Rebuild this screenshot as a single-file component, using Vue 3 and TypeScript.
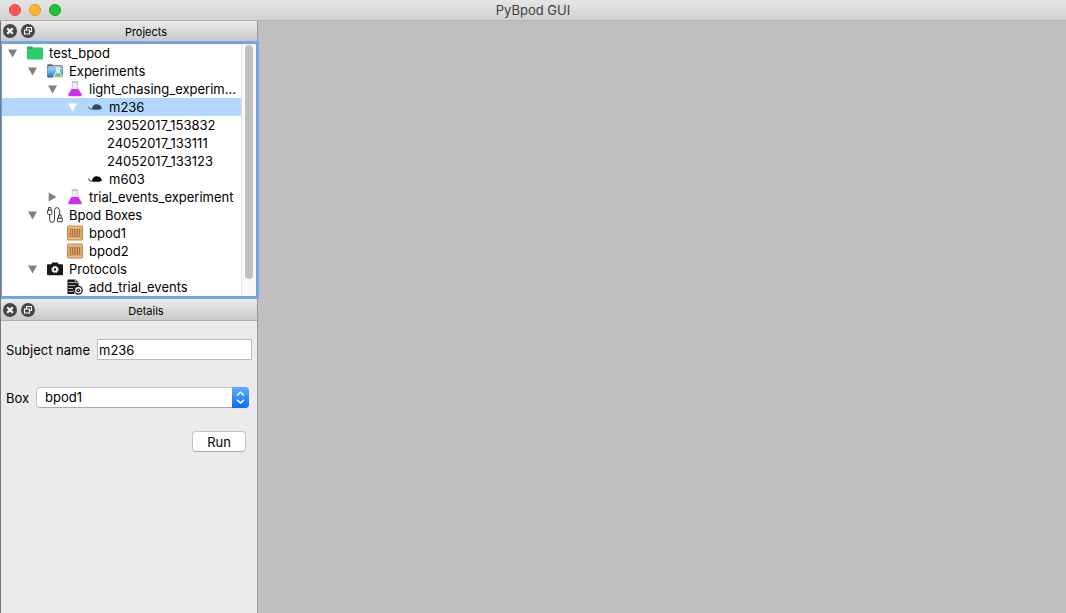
<script setup lang="ts">
import { ref } from 'vue'

type Icon = 'folder' | 'experiments' | 'flask' | 'mouse' | 'cable' | 'crate' | 'camera' | 'protocol'

interface TreeRow {
  id: string
  label: string
  level: number
  icon?: Icon
  open?: boolean
}

const rows = ref<TreeRow[]>([
  { id: 'project', label: 'test_bpod', level: 0, icon: 'folder', open: true },
  { id: 'experiments', label: 'Experiments', level: 1, icon: 'experiments', open: true },
  { id: 'light', label: 'light_chasing_experim...', level: 2, icon: 'flask', open: true },
  { id: 'm236', label: 'm236', level: 3, icon: 'mouse', open: true },
  { id: 's1', label: '23052017_153832', level: 4 },
  { id: 's2', label: '24052017_133111', level: 4 },
  { id: 's3', label: '24052017_133123', level: 4 },
  { id: 'm603', label: 'm603', level: 3, icon: 'mouse' },
  { id: 'trial', label: 'trial_events_experiment', level: 2, icon: 'flask', open: false },
  { id: 'boxes', label: 'Bpod Boxes', level: 1, icon: 'cable', open: true },
  { id: 'bpod1', label: 'bpod1', level: 2, icon: 'crate' },
  { id: 'bpod2', label: 'bpod2', level: 2, icon: 'crate' },
  { id: 'protocols', label: 'Protocols', level: 1, icon: 'camera', open: true },
  { id: 'add', label: 'add_trial_events', level: 2, icon: 'protocol' },
])

const selected = ref('m236')
const subject = ref('m236')
const box = ref('bpod1')
const docks = ['Projects', 'Details']
</script>

<template>
  <div class="window">
    <header class="titlebar">
      <div class="lights">
        <button class="light close" aria-label="Close window"></button>
        <button class="light minimise" aria-label="Minimise window"></button>
        <button class="light zoom" aria-label="Zoom window"></button>
      </div>
      <h1>PyBpod GUI</h1>
    </header>

    <div class="body">
      <aside class="side">
        <section v-for="dock in docks" :key="dock" class="dock" :aria-label="dock">
          <div class="dock-head">
            <button class="dock-btn" :aria-label="`Close ${dock}`">
              <svg viewBox="0 0 14 14"><circle cx="7" cy="7" r="7" fill="#464646" /><path d="M4.2 4.2l5.6 5.6M9.8 4.2L4.2 9.8" stroke="#fff" stroke-width="2.1" /></svg>
            </button>
            <button class="dock-btn" :aria-label="`Float ${dock}`">
              <svg viewBox="0 0 14 14"><circle cx="7" cy="7" r="7" fill="#464646" /><path d="M5.5 5.5v-2h5v4h-2M3.5 6h5v4h-5z" fill="none" stroke="#fff" stroke-width="1.1" /></svg>
            </button>
            <h2>{{ dock }}</h2>
          </div>

          <div v-if="dock === 'Projects'" class="tree-frame">
            <ul class="tree" role="tree" aria-label="Projects">
              <li
                v-for="row in rows"
                :key="row.id"
                class="row"
                :class="{ selected: row.id === selected }"
                role="treeitem"
                :aria-level="row.level + 1"
                :aria-selected="row.id === selected"
                :aria-expanded="row.open"
                @click="selected = row.id"
              >
                <span v-for="n in row.level" :key="n" class="indent"></span>
                <button v-if="row.open !== undefined" class="toggle" :aria-label="`Toggle ${row.label}`">
                  <svg viewBox="0 0 10 10"><path :d="row.open ? 'M0 1.5h9L4.5 9.5z' : 'M0.7 0.5v9L8.5 5z'" fill="currentColor" /></svg>
                </button>
                <span v-else class="toggle"></span>
                <span v-if="row.icon" class="icon">
                  <svg v-if="row.icon === 'folder'" viewBox="0 0 16 16"><path d="M0 2.2q0-.7.7-.7H5l1 1h9.3q.7 0 .7.7V8H0z" fill="#28ad60" /><path d="M0 4h5.2l1-1h9.2q.6 0 .6.6v10.2q0 .7-.7.7H.7q-.7 0-.7-.7z" fill="#2ecc71" /></svg>
                  <svg v-else-if="row.icon === 'experiments'" viewBox="0 0 16 16">
                    <defs><linearGradient id="blue" x2="0" y2="1"><stop stop-color="#b5dcf6" /><stop offset=".5" stop-color="#62aeea" /><stop offset="1" stop-color="#2468b8" /></linearGradient></defs>
                    <path d="M.3 5V2q0-.8.8-.8h4l1 1h8.4q1 0 1 1V5z" fill="#526a80" />
                    <path d="M1.2 3h13.5v2H1.2z" fill="#e6edf2" />
                    <rect x=".3" y="4" width="15.4" height="10.3" rx="1" fill="url(#blue)" stroke="#326a9d" stroke-width=".6" />
                    <path d="M8.5 4.8h5M9.6 4.8v3.4l-3 5q-.6 1.6 1 1.6h6.600q1.400 0 .8-1.600l-2.600-5V4.800" fill="#dceaf0" stroke="#f5fafb" stroke-width=".8" />
                    <path d="M9 10.2h4l1.7 3.6H7.2z" fill="#7fbd5c" />
                  </svg>
                  <svg v-else-if="row.icon === 'flask'" viewBox="0 0 16 16">
                    <path d="M5.400 1.300v5.200L1.300 13.200Q.6 15.200 2.300 15.200h11.400q1.700 0 1-2L10.600 6.500V1.300z" fill="#e4e9ed" stroke="#bcc5cb" stroke-width=".7" />
                    <path d="M4.700 7.900h6.600l3.100 5.400q.6 1.600-.8 1.600H2.400q-1.400 0-.8-1.600z" fill="#d42cf2" />
                    <path d="M4.600.9h6.800" stroke="#aeb8bf" stroke-width="1.300" /><path d="M7 2v4.500" stroke="#fff" />
                  </svg>
                  <svg v-else-if="row.icon === 'mouse'" viewBox="0 0 16 16"><path d="M5 10Q5.500 5.200 9.700 5.200q1.500 0 2.300.8 1-.5 1.300.7 1.300 1.100 1.700 2.500-.5.9-2 1.100v.5H6q0-.5-1-.8z" fill="currentColor" /><path d="M6 10H3.200Q1.500 9.700 1.800 7.500" fill="none" stroke="currentColor" stroke-width=".8" /></svg>
                  <svg v-else-if="row.icon === 'cable'" viewBox="0 0 16 16"><g fill="none" stroke="#222" stroke-width=".9"><path d="M.6 3.200h4.200v3.300q0 1-1 1H1.600q-1 0-1-1zM1.500 3V.6h2.400V3M2.700 7.700v4.800q0 2.900 2.400 2.900t2.400-2.900V3.600Q7.500.6 9.900.6t2.800 3V8M11.500 11V8h2.600v3M10.500 11.200h4.700v3.500h-4.700z" /></g></svg>
                  <svg v-else-if="row.icon === 'crate'" viewBox="0 0 16 16"><rect x=".5" y="1" width="15" height="14" rx=".8" fill="#dda567" stroke="#c48a52" /><path d="M1 2.500h14M1 13.500h14" stroke="#efbf88" /><rect x="3" y="4.500" width="10" height="7" fill="#a86c3a" /><path d="M4.500 5v6M6.800 5v6M9.200 5v6M11.500 5v6" stroke="#dca870" stroke-width="1.200" /></svg>
                  <svg v-else-if="row.icon === 'camera'" viewBox="0 0 16 16"><path d="M0 4.200q0-1 1-1h3.300L5.300 1.500h5.400l1 1.700H15q1 0 1 1v9q0 1-1 1H1q-1 0-1-1z" fill="#17181a" /><circle cx="8" cy="8.500" r="2.100" fill="none" stroke="#fff" stroke-width="1.700" /><circle cx="8" cy="8.500" r="3.300" fill="none" stroke="#fff" stroke-width="1" stroke-dasharray="1.300 1.290" /></svg>
                  <svg v-else viewBox="0 0 16 16">
                    <path d="M.5.500h8l3 3V7Q7 7.500 6.500 11.500q0 2 1 3.500h-7z" fill="#17181a" />
                    <path d="M1.500 3.500h6M1.500 6.500h7M1.500 9.500h4.500M1.500 12.500h4.500M8.300.800v3h3" fill="none" stroke="#fff" stroke-width=".7" />
                    <circle cx="11.300" cy="11.300" r="3.900" fill="#fff" stroke="#17181a" stroke-width="1.300" /><circle cx="11.300" cy="11.300" r="1.900" fill="#17181a" /><circle cx="11.300" cy="11.300" r=".7" fill="#fff" />
                  </svg>
                </span>
                <span class="label">{{ row.label }}</span>
              </li>
            </ul>
            <div class="scroll"><div class="thumb"></div></div>
          </div>

          <form v-else class="details" @submit.prevent>
            <div class="field">
              <label for="subject">Subject name</label>
              <input id="subject" v-model="subject" type="text" />
            </div>
            <div class="field box-field">
              <label for="box">Box</label>
              <div class="select">
                <select id="box" v-model="box">
                  <option>bpod1</option>
                  <option>bpod2</option>
                </select>
                <svg class="stepper" viewBox="0 0 17 21"><path d="M5 8.500l3.500-3.300L12 8.500M5 12.700L8.500 16l3.500-3.300" fill="none" stroke="#fff" stroke-width="1.500" /></svg>
              </div>
            </div>
            <button class="run" type="submit">Run</button>
          </form>
        </section>
      </aside>
      <main class="workspace" aria-label="Workspace"></main>
    </div>
  </div>
</template>

<style>
body {
  background: #bfbfbf;
}
</style>

<style scoped>
.window {
  display: flex;
  flex-direction: column;
  min-height: 100vh;
  font: 13px/18px Inter, Roboto, "Liberation Sans", sans-serif;
  color: #000;
}
.window * {
  box-sizing: border-box;
}
button,
input,
select {
  font: inherit;
  color: inherit;
  margin: 0;
}
h1,
h2 {
  margin: 0;
  font-weight: 400;
}
.titlebar {
  display: grid;
  grid-template-columns: 1fr auto 1fr;
  align-items: center;
  height: 21px;
  padding: 0 9px;
  background: linear-gradient(#e5e5e5, #d2d2d2);
  border-bottom: 1px solid #b0b0b0;
}
.titlebar h1 {
  font-size: 13px;
  color: #404040;
}
.lights {
  display: flex;
  gap: 8px;
}
.light {
  width: 12px;
  height: 12px;
  padding: 0;
  border: 1px solid #e2463f;
  border-radius: 50%;
  background: #ff5650;
}
.minimise {
  border-color: #e09e22;
  background: #ffb52b;
}
.zoom {
  border-color: #18a02c;
  background: #24c138;
}
.body {
  display: flex;
  flex: 1;
}
.side {
  flex: 0 0 258px;
  min-width: 0;
  background: #ebebeb;
  border-left: 1px solid #747b74;
  border-right: 1px solid #969696;
}
.workspace {
  flex: 1;
  background: #bfbfbf;
}
.dock-head {
  display: flex;
  align-items: center;
  gap: 4px;
  height: 21px;
  padding: 0 4px 0 2px;
  background: linear-gradient(#eaeaea, #c9c9c9);
  border-bottom: 1px solid #b0b0b0;
}
.dock-btn {
  display: flex;
  width: 14px;
  height: 14px;
  padding: 0;
  border: 0;
  background: none;
}
.dock-btn svg {
  width: 14px;
  height: 14px;
}
.dock-head h2 {
  flex: 1;
  padding-top: 2px;
  font-size: 11px;
  line-height: 16px;
  text-align: center;
}
.tree-frame {
  position: relative;
  display: flex;
  margin: 1px 0 3px;
  background: #fff;
  border: 1px solid #6f9fdb;
  box-shadow: 0 0 0 2px #75a7e8;
  clip-path: inset(-2px -2px -2px 0);
}
.tree {
  flex: 1;
  min-width: 0;
  margin: 0;
  padding: 0;
  list-style: none;
  font-feature-settings: "calt" 0;
}
.row {
  display: flex;
  align-items: center;
  height: 18px;
  padding-left: 5px;
  white-space: nowrap;
}
.row.selected {
  background: #b2d7ff;
}
.indent {
  flex: 0 0 20px;
}
.toggle {
  display: flex;
  flex: 0 0 20px;
  height: 10px;
  padding: 0 0 0 1px;
  border: 0;
  background: none;
  color: #808080;
}
.toggle svg {
  width: 10px;
  height: 10px;
}
.selected .toggle {
  color: #fff;
}
.icon {
  display: flex;
  flex: 0 0 22px;
}
.icon svg {
  width: 16px;
  height: 16px;
}
.selected .icon {
  color: #35465a;
}
.scroll {
  display: flex;
  flex: 0 0 15px;
  justify-content: center;
  padding: 1px 0 17px;
  background: #fafafa;
  border-left: 1px solid #e6e6e6;
}
.thumb {
  width: 8px;
  border-radius: 4px;
  background: #c1c1c1;
}
.details {
  display: flex;
  flex-direction: column;
  padding: 18px 5px;
}
.field {
  display: flex;
  align-items: center;
  gap: 7px;
}
.field input {
  flex: 1;
  min-width: 0;
  height: 21px;
  padding: 0 1px;
  border: 1px solid #bcbcbc;
  background: #fff;
}
.box-field {
  margin: 27px 3px 0 0;
}
.select {
  position: relative;
  flex: 1;
}
.select select {
  display: block;
  width: 100%;
  height: 21px;
  padding: 0 20px 2px 8px;
  appearance: none;
  border: 1px solid #c3c3c3;
  border-bottom-color: #a9a9a9;
  border-radius: 4px;
  background: #fff;
}
.stepper {
  position: absolute;
  top: 0;
  right: 0;
  width: 17px;
  height: 21px;
  border-radius: 0 4px 4px 0;
  background: linear-gradient(#62aefa, #0b6bfd);
  pointer-events: none;
}
.run {
  align-self: flex-end;
  width: 54px;
  height: 21px;
  margin: 23px 6px 0 0;
  padding: 0;
  border: 1px solid #c3c3c3;
  border-bottom-color: #a9a9a9;
  border-radius: 4px;
  background: #fff;
}
</style>
